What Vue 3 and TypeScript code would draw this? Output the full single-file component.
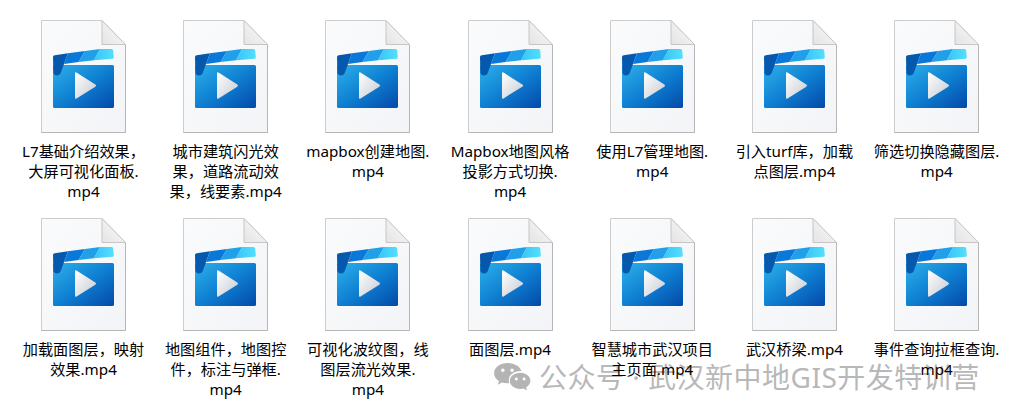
<script setup lang="ts">
const files: string[][] = [
  ['L7基础介绍效果，', '大屏可视化面板.', 'mp4'],
  ['城市建筑闪光效', '果，道路流动效', '果，线要素.mp4'],
  ['mapbox创建地图.', 'mp4'],
  ['Mapbox地图风格', '投影方式切换.', 'mp4'],
  ['使用L7管理地图.', 'mp4'],
  ['引入turf库，加载', '点图层.mp4'],
  ['筛选切换隐藏图层.', 'mp4'],
  ['加载面图层，映射', '效果.mp4'],
  ['地图组件，地图控', '件，标注与弹框.', 'mp4'],
  ['可视化波纹图，线', '图层流光效果.', 'mp4'],
  ['面图层.mp4'],
  ['智慧城市武汉项目', '主页面.mp4'],
  ['武汉桥梁.mp4'],
  ['事件查询拉框查询.', 'mp4']
]
</script>

<template>
  <div class="page">
    <svg class="defs" width="0" height="0" aria-hidden="true">
      <defs>
        <linearGradient id="sheet" x1="0" y1="0" x2="1" y2="1">
          <stop offset="0" stop-color="#fafbfc" />
          <stop offset="1" stop-color="#f2f4f7" />
        </linearGradient>
        <linearGradient id="fold" x1="0" y1="1" x2="1" y2="0">
          <stop offset="0" stop-color="#e4e4e4" />
          <stop offset="1" stop-color="#fbfbfb" />
        </linearGradient>
        <linearGradient id="body" x1="0" y1="0" x2="1" y2="1">
          <stop offset="0" stop-color="#2db0ea" />
          <stop offset="0.5" stop-color="#0f80d2" />
          <stop offset="1" stop-color="#0349a8" />
        </linearGradient>
        <linearGradient id="top-stripe" x1="0" y1="0" x2="1" y2="0">
          <stop offset="0" stop-color="#36c4f6" />
          <stop offset="1" stop-color="#55dffd" />
        </linearGradient>
        <linearGradient id="play" x1="0" y1="0" x2="1" y2="1">
          <stop offset="0" stop-color="#ffffff" />
          <stop offset="1" stop-color="#c5cad2" />
        </linearGradient>
        <symbol id="video-file" viewBox="0 0 85 113">
          <path d="M.5.5H61L84.5 24.5V112.5H.5Z" fill="url(#sheet)" stroke="#cdcdcd" />
          <path d="M84.500 24.500V112.500H.5" fill="none" stroke="#b6b6b6" />
          <path d="M61 .5V24.500H84.500Z" fill="url(#fold)" stroke="#c6c6c6" />
          <rect x="12" y="45" width="61" height="43" rx="1.6" fill="url(#body)" />
          <path d="M12 36.800Q12 35.500 13.800 35.200L27 33.300 19.500 53.500Q18.500 55.500 15.800 55.500 13 55.500 12.400 52.500Z" fill="#0458ad" />
          <path d="M27 33.300 44 31 37.500 42 23 44Z" fill="#0a78d9" />
          <path d="M44 31 59 29 53 40.200 37.500 42Z" fill="#219fe8" />
          <path d="M59 29 70.500 28.900Q72 28.800 72.200 30.400L72.800 37.200Q72.900 38.600 71.600 38.700L53 40.200Z" fill="url(#top-stripe)" />
          <path d="M35.500 52.600Q34 51.800 34 53.500V77.500Q34 79.300 35.500 78.400L54.300 66.700Q56 65.600 54.300 64.600Z" fill="url(#play)" />
        </symbol>
      </defs>
    </svg>

    <div class="mark">
      <svg class="mark__logo" viewBox="0 0 40 31" aria-hidden="true">
        <path d="M15 1C7 1 1 5.600 1 11.500c0 3.300 1.900 6.200 5 8.200L4.800 23.500l4.300-2.300c1.800.5 3.800.8 5.900.8 1 0 1.200-.1 1.600-.2-.3-1-.5-1.800-.5-2.800 0-5.500 5.400-9.600 12.100-9.600h1C28 4.700 22 1 15 1Z" fill="#b4b4b4" />
        <circle cx="10" cy="8.500" r="1.800" fill="#fff" />
        <circle cx="19.500" cy="8.500" r="1.800" fill="#fff" />
        <path d="M28 11c-6 0-10.800 3.800-10.800 8.500S22 28 28 28c1.300 0 2.400-.2 3.500-.5l3.500 2-1-3.200c2.700-1.600 4.500-4 4.500-6.800C38.500 14.800 34 11 28 11Z" fill="#b4b4b4" />
        <circle cx="24" cy="17.500" r="1.500" fill="#fff" />
        <circle cx="32" cy="17.500" r="1.500" fill="#fff" />
      </svg>
      <span class="mark__text">公众号 · 武汉新中地GIS开发特训营</span>
    </div>

    <div class="grid">
      <div v-for="(lines, i) in files" :key="i" class="file">
        <svg class="file__icon" width="85" height="113"><use href="#video-file" /></svg>
        <div class="file__name">
          <div v-for="line in lines" :key="line">{{ line }}</div>
        </div>
      </div>
    </div>
  </div>
</template>

<style>
html,
body {
  margin: 0;
  background: #fff;
}
</style>

<style scoped>
.page {
  position: relative;
  width: 1010px;
  height: 418px;
  overflow: hidden;
  font-family: "Noto Sans", "Noto Sans CJK SC", sans-serif;
}

.defs {
  display: block;
}

.grid {
  position: relative;
  z-index: 1;
  display: grid;
  grid-template-columns: repeat(7, 142.2px);
  grid-auto-rows: 198px;
  padding: 20px 0 0 12.4px;
}

.file {
  display: flex;
  flex-direction: column;
  align-items: center;
}

.file__icon {
  display: block;
}

.file__name {
  margin-top: 8px;
  font-size: 15.2px;
  line-height: 20px;
  color: #000;
  text-align: center;
  white-space: nowrap;
}

.mark {
  position: absolute;
  left: 493px;
  top: 362px;
  display: flex;
  align-items: center;
  gap: 7px;
}

.mark__logo {
  display: block;
  width: 39px;
  height: 30px;
}

.mark__text {
  font-size: 28px;
  line-height: 30px;
  letter-spacing: 0.5px;
  color: #b8b8b8;
  white-space: nowrap;
}
</style>
